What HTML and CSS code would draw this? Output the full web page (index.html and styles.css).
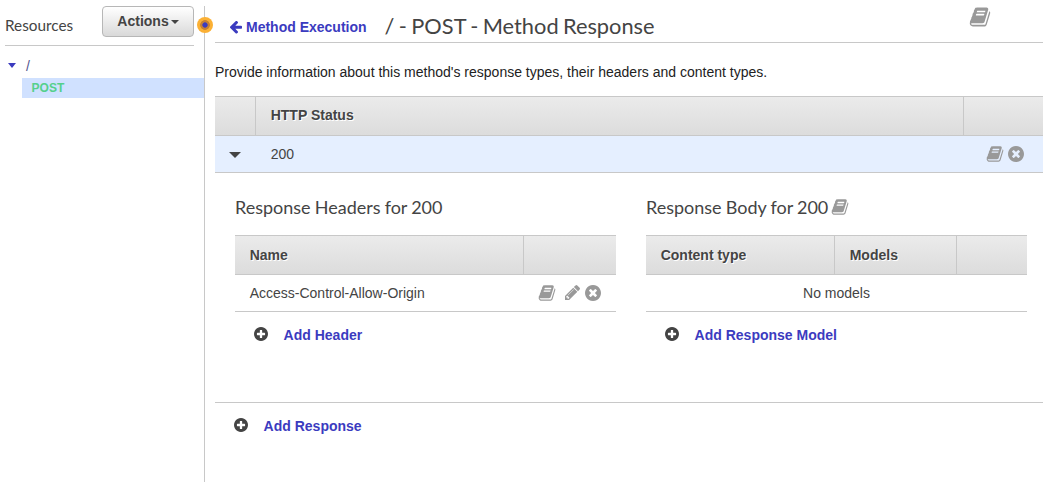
FILE: index.html
```html
<!DOCTYPE html>
<html lang="en">
<head>
<meta charset="utf-8">
<title>Method Response</title>
<link rel="stylesheet" href="styles.css">
</head>
<body>
<svg class="sprite" aria-hidden="true">
  <symbol id="book" viewBox="0 0 1792 1792"><path d="M1703 478q40 57 18 129l-275 906q-19 64-76.5 107.5t-122.5 43.5h-923q-77 0-148.5-53.5t-99.5-131.5q-24-67-2-127 0-4 3-27t4-37q1-8-3-21.5t-3-19.5q2-11 8-21t16.5-23.5 16.5-23.5q23-38 45-91.5t30-91.5q3-10 .5-30t-.5-28q3-11 17-28t17-23q21-36 42-92t25-90q1-9-2.5-32t.5-28q4-13 22-30.5t22-22.5q19-26 42.5-84.5t27.5-96.5q1-8-3-25.5t-2-26.5q2-8 9-18t18-23 17-21q8-12 16.5-30.5t15-35 16-36 19.5-32 26.5-23.5 36-11.5 47.5 5.500l-1 3q38-9 51-9h761q74 0 114 56t18 130l-274 906q-36 119-71.5 153.500t-128.500 34.500h-869q-27 0-38 15-11 16-1 43 24 70 144 70h923q29 0 56-15.500t35-41.500l300-987q7-22 5-57 38 15 59 43zm-1064 2q-4 13 2 22.500t20 9.500h608q13 0 25.500-9.500t16.500-22.500l21-64q4-13-2-22.500t-20-9.500h-608q-13 0-25.500 9.500t-16.500 22.500zm-83 256q-4 13 2 22.500t20 9.500h608q13 0 25.500-9.500t16.500-22.500l21-64q4-13-2-22.500t-20-9.500h-608q-13 0-25.500 9.500t-16.500 22.500z"/></symbol>
  <symbol id="remove" viewBox="128 128 1536 1536"><path d="M1277 1122q0-26-19-45l-181-181 181-181q19-19 19-45 0-27-19-46l-90-90q-19-19-46-19-26 0-45 19l-181 181-181-181q-19-19-45-19-27 0-46 19l-90 90q-19 19-19 46 0 26 19 45l181 181-181 181q-19 19-19 45 0 27 19 46l90 90q19 19 46 19 26 0 45-19l181-181 181 181q19 19 45 19 27 0 46-19l90-90q19-19 19-46zm387-226q0 209-103 385.500t-279.500 279.500-385.500 103-385.500-103-279.500-279.500-103-385.500 103-385.500 279.500-279.500 385.500-103 385.500 103 279.500 279.500 103 385.500z"/></symbol>
  <symbol id="plus" viewBox="128 128 1536 1536"><path d="M1344 960v-128q0-26-19-45t-45-19h-256v-256q0-26-19-45t-45-19h-128q-26 0-45 19t-19 45v256h-256q-26 0-45 19t-19 45v128q0 26 19 45t45 19h256v256q0 26 19 45t45 19h128q26 0 45-19t19-45v-256h256q26 0 45-19t19-45zm320-64q0 209-103 385.500t-279.500 279.500-385.500 103-385.500-103-279.500-279.500-103-385.500 103-385.500 279.500-279.500 385.500-103 385.500 103 279.500 279.500 103 385.500z"/></symbol>
  <symbol id="pencil" viewBox="128 149 1515 1515"><path d="M491 1536l91-91-235-235-91 91v107h128v128h107zm523-928q0-22-22-22-10 0-17 7l-542 542q-7 7-7 17 0 22 22 22 10 0 17-7l542-542q7-7 7-17zm-54-192l416 416-832 832h-416v-416zm683 96q0 53-37 90l-166 166-416-416 166-165q36-38 90-38 53 0 91 38l235 234q37 39 37 91z"/></symbol>
  <symbol id="back" viewBox="192 256 1472 1472"><path d="M1664 896v128q0 53-32.500 90.500t-84.500 37.500h-704l293 294q38 36 38 90t-38 90l-75 76q-37 37-90 37-52 0-91-37l-651-652q-37-37-37-90 0-52 37-91l651-650q38-38 91-38 52 0 90 38l75 74q38 38 38 91t-38 91l-293 293h704q52 0 84.500 37.500t32.500 90.500z"/></symbol>
</svg>
<div class="app">
  <aside class="sidebar">
    <div class="sidebar-head">
      <span class="sidebar-title">Resources</span>
      <button class="actions">Actions<i class="caret caret-small"></i></button>
    </div>
    <div class="tree-root"><i class="caret caret-tree"></i><span class="tree-path">/</span></div>
    <div class="tree-item">POST</div>
    <span class="handle"></span>
  </aside>
  <main class="main">
    <header class="page-head">
      <a class="back"><svg class="icon-back"><use href="#back"/></svg>Method Execution</a>
      <h1 class="title">/ - POST - Method Response</h1>
      <svg class="icon-page"><use href="#book"/></svg>
    </header>
    <p class="intro">Provide information about this method's response types, their headers and content types.</p>
    <div class="row head status-grid"><span></span><span class="cell">HTTP Status</span><span class="cell"></span></div>
    <div class="row selected status-grid">
      <span class="toggle"><i class="caret"></i></span>
      <span class="cell">200</span>
      <span class="tools status-tools"><svg class="icon-book"><use href="#book"/></svg><svg class="icon-remove"><use href="#remove"/></svg></span>
    </div>
    <div class="details">
      <section class="panel">
        <h2 class="subtitle">Response Headers for 200</h2>
        <div class="row head header-grid"><span class="cell">Name</span><span class="cell"></span></div>
        <div class="row header-grid">
          <span class="cell">Access-Control-Allow-Origin</span>
          <span class="tools"><svg class="icon-book"><use href="#book"/></svg><svg class="icon-pencil"><use href="#pencil"/></svg><svg class="icon-remove"><use href="#remove"/></svg></span>
        </div>
        <a class="add"><svg class="icon-plus"><use href="#plus"/></svg>Add Header</a>
      </section>
      <section class="panel">
        <h2 class="subtitle">Response Body for 200<svg class="icon-book"><use href="#book"/></svg></h2>
        <div class="row head body-grid"><span class="cell">Content type</span><span class="cell">Models</span><span class="cell"></span></div>
        <div class="row empty">No models</div>
        <a class="add"><svg class="icon-plus"><use href="#plus"/></svg>Add Response Model</a>
      </section>
    </div>
    <a class="add"><svg class="icon-plus"><use href="#plus"/></svg>Add Response</a>
  </main>
</div>
</body>
</html>
```
FILE: styles.css
```css
* { box-sizing: border-box; }
body {
  margin: 0;
  overflow: hidden;
  background: #fff;
  color: #444;
  font: 14px/20px "Liberation Sans", Arial, sans-serif;
}
h1, h2, p { margin: 0; font-weight: 400; }
svg { flex: none; fill: #999; }
.sprite { display: none; }
.app { display: flex; height: 482px; padding-top: 6px; }

.sidebar {
  position: relative;
  flex: none;
  width: 205px;
  border-right: 1px solid #c8c8c8;
}
.sidebar-head {
  display: flex;
  justify-content: space-between;
  height: 40px;
  margin: 0 10px 0 5px;
  border-bottom: 1px solid #c8c8c8;
}
.sidebar-title { padding-top: 9px; font: 15.3px/20px Lato, sans-serif; }
.actions {
  display: flex;
  align-items: center;
  justify-content: center;
  gap: 2px;
  width: 92px;
  height: 31px;
  padding: 0 0 1px;
  border: 1px solid #b7b7b7;
  border-radius: 4px;
  background: linear-gradient(#fff, #d9d9d9);
  color: #444;
  font: bold 14px/20px "Liberation Sans", Arial, sans-serif;
}
.caret {
  border: 6px solid transparent;
  border-top-color: #444;
  border-bottom: 0;
}
.caret-small { border-width: 4px 4px 0; margin-top: 2px; }
.caret-tree { border-width: 5px 4.5px 0; border-top-color: #3b3bbf; }
.tree-root {
  display: flex;
  align-items: center;
  gap: 9px;
  height: 32px;
  padding: 7px 0 0 8px;
}
.tree-path { padding-left: 1px; color: #55558f; }
.tree-item {
  height: 20px;
  margin-left: 22px;
  padding-left: 9.6px;
  background: #d0e1ff;
  color: #55d08c;
  font-size: 12px;
  font-weight: bold;
}
.handle {
  position: absolute;
  top: 11px;
  right: -8.5px;
  width: 16px;
  height: 16px;
  border-radius: 50%;
  background: radial-gradient(circle, #3b3bbf 0 2.3px, #c58032 3px 4.5px, #fbb034 5.2px);
}

.main { flex: 1; min-width: 0; padding-left: 10px; }
.page-head {
  display: flex;
  height: 37px;
  padding-left: 15px;
  border-bottom: 1px solid #c8c8c8;
}
.back {
  display: flex;
  gap: 4px;
  padding-top: 11px;
  color: #3b3bbf;
  font-weight: bold;
}
.icon-back { width: 12px; height: 13px; margin-top: 4px; fill: #3b3bbf; }
.title {
  flex: 1;
  padding: 6px 0 0 18px;
  font: 21.8px/28px Lato, sans-serif;
  word-spacing: -1.2px;
}
.icon-page { width: 22px; height: 22px; margin-right: 52px; }
.intro { height: 53px; padding-top: 19px; color: #222; }

.row { display: grid; height: 37px; border-bottom: 1px solid #c8c8c8; line-height: 36px; }
.head {
  height: 40px;
  border-top: 1px solid #c8c8c8;
  background: linear-gradient(#ebebeb, #dcdcdc);
  font-weight: bold;
  line-height: 37px;
  text-shadow: 1px 1px 0 #fff;
}
.panel .head { line-height: 38px; }
.cell { padding-left: 14.7px; }
.head .cell { border-left: 1px solid #c8c8c8; }
.head .cell:first-child { border-left: 0; }
.selected { background: #e5efff; }
.status-grid { grid-template-columns: 40px 708px 1fr; }
.header-grid { grid-template-columns: 288px 1fr; }
.body-grid { grid-template-columns: 188px 122px 1fr; }
.selected .cell { padding-left: 15.7px; }
.toggle { display: flex; align-items: center; padding: 2px 0 0 14px; }
.tools { display: flex; align-items: center; padding-left: 15px; }
.status-tools { gap: 4px; padding: 0 0 1px 23px; }
.icon-book { width: 18px; height: 18px; }
.icon-remove { width: 16px; height: 16px; }
.icon-pencil { width: 15px; height: 15px; margin: 0 5px 0 9px; }
.header-grid .tools { padding-bottom: 1px; }
.details {
  display: grid;
  grid-template-columns: 381px 381px;
  gap: 30px;
  height: 230px;
  padding: 24px 0 0 20px;
  border-bottom: 1px solid #c8c8c8;
}
.subtitle {
  display: flex;
  gap: 3px;
  height: 38px;
  font: 18px/20px Lato, sans-serif;
  word-spacing: -0.5px;
}
.subtitle .icon-book { margin-top: 1px; }
.empty { text-align: center; }
.add {
  display: flex;
  gap: 15.6px;
  padding: 13px 0 0 19px;
  color: #3b3bbf;
  font-weight: bold;
}
.icon-plus { width: 14px; height: 14px; margin-top: 2px; fill: #444; }
```
